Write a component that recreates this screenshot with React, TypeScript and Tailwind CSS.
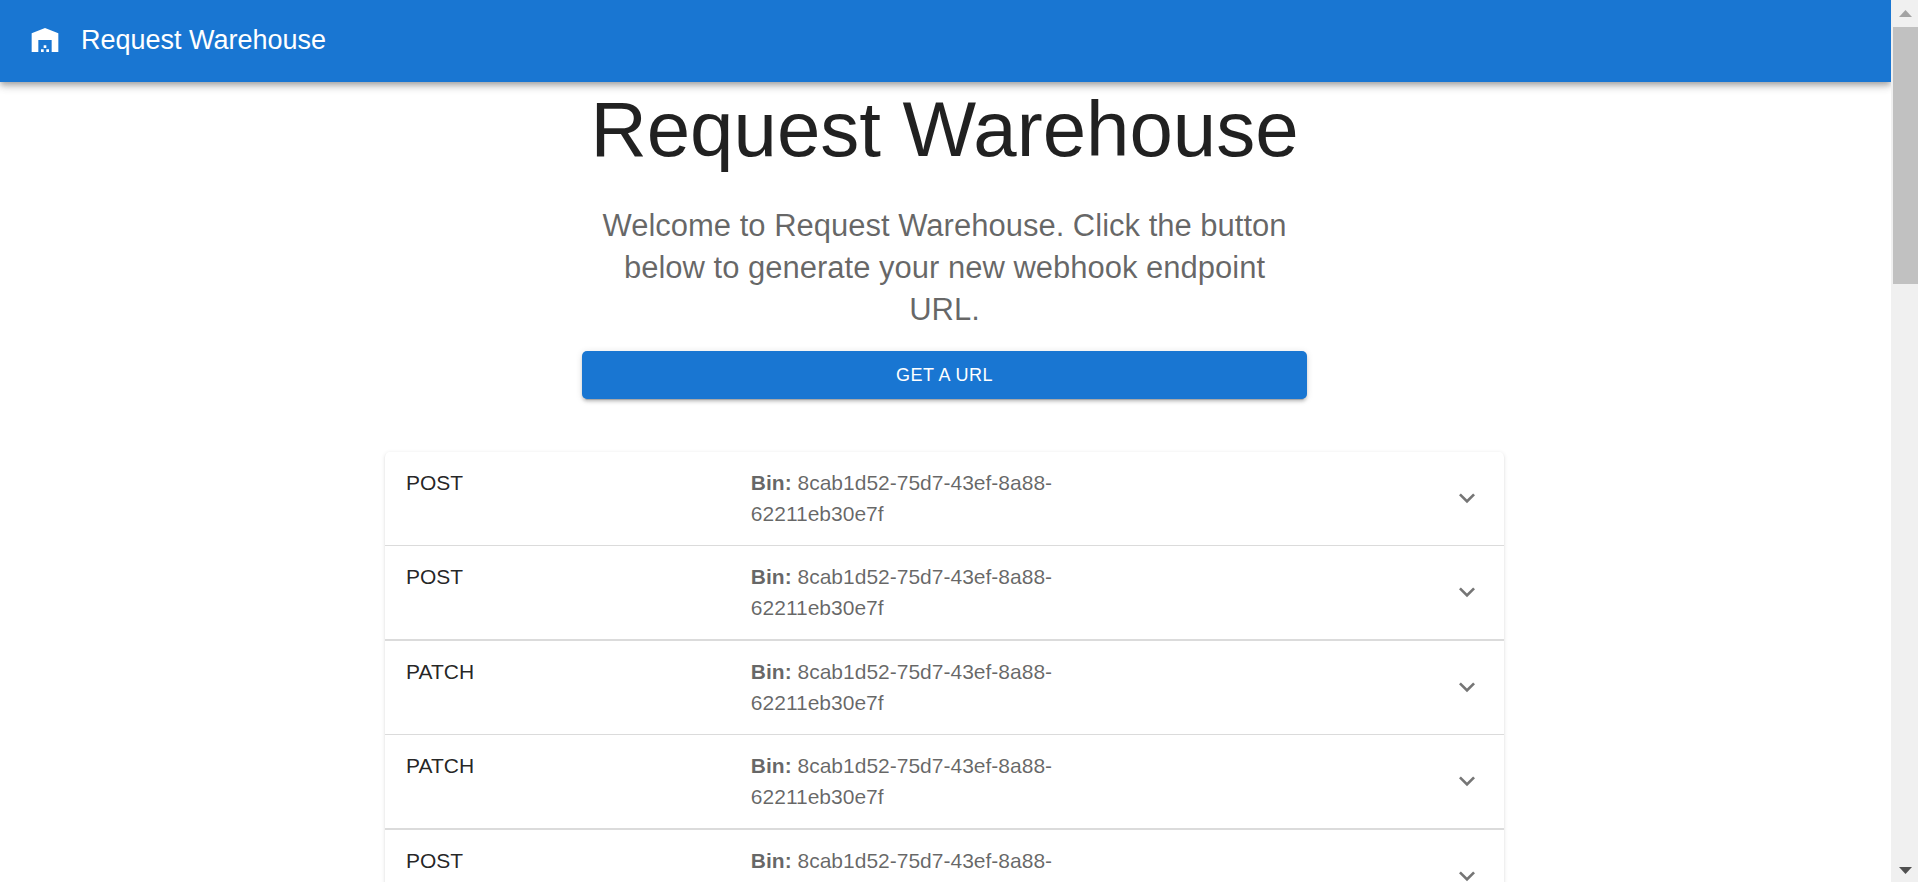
import React, { useState } from "react";

type WebhookRequest = { id: number; method: string; bin: string };

const BIN = "8cab1d52-75d7-43ef-8a88-62211eb30e7f";

const requests: WebhookRequest[] = [
  { id: 1, method: "POST", bin: BIN },
  { id: 2, method: "POST", bin: BIN },
  { id: 3, method: "PATCH", bin: BIN },
  { id: 4, method: "PATCH", bin: BIN },
  { id: 5, method: "POST", bin: BIN },
];

function WarehouseIcon() {
  return (
    <svg viewBox="0 0 24 24" className="size-8 fill-current" aria-hidden="true">
      <path d="M22 21V7L12 3 2 7v14h5v-9h10v9h5zm-11-2H9v2h2v-2zm2-3h-2v2h2v-2zm2 3h-2v2h2v-2z" />
    </svg>
  );
}

function ExpandMoreIcon({ open }: { open: boolean }) {
  return (
    <svg
      viewBox="0 0 24 24"
      className={open ? "size-8 shrink-0 rotate-180 fill-black/54" : "size-8 shrink-0 fill-black/54"}
      aria-hidden="true"
    >
      <path d="M16.59 8.59 12 13.17 7.41 8.59 6 10l6 6 6-6z" />
    </svg>
  );
}

function Header() {
  return (
    <header className="relative z-10 flex h-[82px] shrink-0 items-center gap-5 bg-[#1976d2] px-[29px] pb-0.5 text-white shadow-[0_3px_5px_-1px_rgba(0,0,0,0.2),0_5px_7px_0_rgba(0,0,0,0.14),0_1px_13px_0_rgba(0,0,0,0.12)]">
      <WarehouseIcon />
      <span className="text-[27px] leading-[42px]">Request Warehouse</span>
    </header>
  );
}

function RequestRow({ request }: { request: WebhookRequest }) {
  const [open, setOpen] = useState(false);
  return (
    <li className="border-[#dbdbdb] even:border-t not-first:odd:border-t-2">
      <button
        type="button"
        aria-expanded={open}
        onClick={() => setOpen(!open)}
        className="flex w-full items-center px-[21px] pt-[15px] pb-4 text-left text-[21px] leading-[31px]"
      >
        <span className="flex grow items-start">
          <span className="w-[33%] shrink-0 text-black/87">{request.method}</span>
          <span className="w-[33%] text-black/60">
            <b>Bin:</b> {request.bin}
          </span>
        </span>
        <ExpandMoreIcon open={open} />
      </button>
    </li>
  );
}

function Scrollbar() {
  return (
    <div aria-hidden="true" className="flex w-[27px] shrink-0 flex-col bg-[#f0f0f0] pl-0.5">
      <div className="flex h-[27px] shrink-0 items-center justify-center">
        <svg viewBox="0 0 13 7" className="h-[7px] w-[13px] fill-[#a3a3a3]">
          <path d="M6.5 0 13 7H0z" />
        </svg>
      </div>
      <div className="grow">
        <div className="h-[31%] bg-[#c1c1c1]" />
      </div>
      <div className="flex h-[27px] shrink-0 items-center justify-center pt-1">
        <svg viewBox="0 0 13 7" className="h-[7px] w-[13px] fill-[#505050]">
          <path d="M6.5 7 0 0h13z" />
        </svg>
      </div>
    </div>
  );
}

export default function App() {
  return (
    <div className="flex h-screen overflow-hidden bg-white font-['Liberation_Sans',Arial,sans-serif]">
      <div className="flex min-w-0 grow flex-col overflow-hidden">
        <Header />
        <main className="min-h-0 grow overflow-y-auto pr-0.5 [scrollbar-width:none]">
          <section className="mx-auto flex max-w-[725px] flex-col text-center">
            <h1 className="mb-7 text-[78px] leading-[95px] text-black/87">Request Warehouse</h1>
            <p className="px-3 text-[31px] leading-[42px] text-black/60">
              Welcome to Request Warehouse. Click the button below to generate your new webhook endpoint URL.
            </p>
            <button
              type="button"
              className="mt-5 h-12 rounded-[5px] bg-[#1976d2] text-lg tracking-wide text-white uppercase shadow-[0_4px_1px_-3px_rgba(0,0,0,0.2),0_3px_3px_0_rgba(0,0,0,0.14),0_1px_7px_0_rgba(0,0,0,0.12)]"
            >
              Get a URL
            </button>
          </section>
          <ul className="mx-auto mt-[53px] max-w-[1119px] rounded-[5px] shadow-[0_3px_1px_-3px_rgba(0,0,0,0.2),0_1px_1px_0_rgba(0,0,0,0.14),0_1px_4px_0_rgba(0,0,0,0.12)]">
            {requests.map((request) => (
              <RequestRow key={request.id} request={request} />
            ))}
          </ul>
        </main>
      </div>
      <Scrollbar />
    </div>
  );
}
